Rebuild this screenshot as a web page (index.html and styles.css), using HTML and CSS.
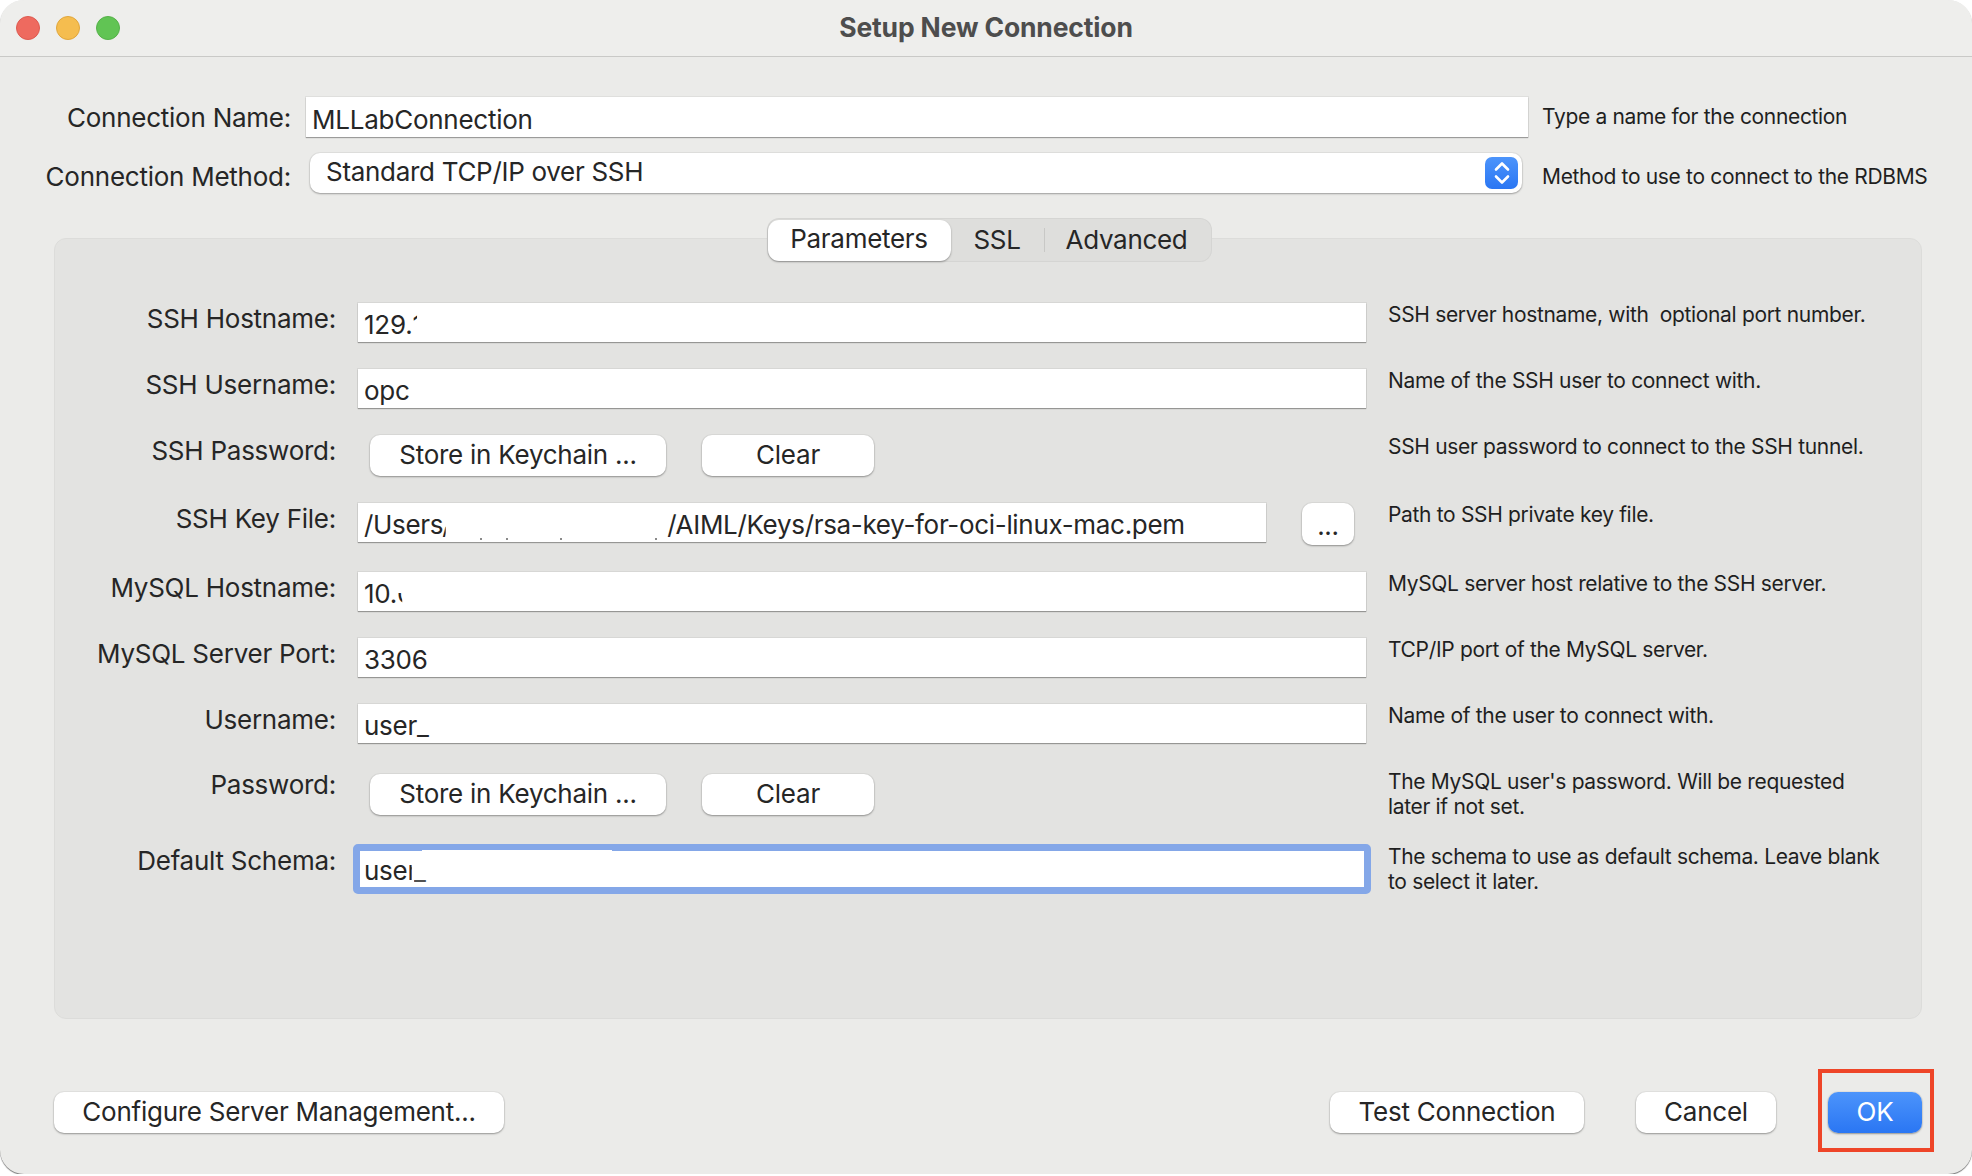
FILE: index.html
```html
<!DOCTYPE html>
<html lang="en">
<head>
    <meta charset="UTF-8">
    <meta name="viewport" content="width=device-width, initial-scale=1.0">
    <title>Setup New Connection</title>
    <link rel="stylesheet" href="styles.css">
</head>
<body>
    <div class="window">
        <header class="titlebar">
            <div class="lights">
                <span class="light red"></span>
                <span class="light yellow"></span>
                <span class="light green"></span>
            </div>
            <h1>Setup New Connection</h1>
        </header>

        <div class="content">
            <div class="top-form">
                <label class="top-label">Connection Name:</label>
                <div class="field top-field">MLLabConnection</div>
                <div class="top-hint">Type a name for the connection</div>

                <label class="top-label method-label">Connection Method:</label>
                <div class="select">
                    <span>Standard TCP/IP over SSH</span>
                    <span class="stepper">
                        <svg width="20" height="26" viewBox="0 0 20 26" fill="none" stroke="white" stroke-width="2.6" stroke-linecap="round" stroke-linejoin="round">
                            <path d="M4 9.5 L10 3.5 L16 9.5"/>
                            <path d="M4 16.5 L10 22.5 L16 16.5"/>
                        </svg>
                    </span>
                </div>
                <div class="top-hint method-hint">Method to use to connect to the RDBMS</div>
            </div>

            <section class="panel">
                <div class="tabs">
                    <span class="tab tab-active">Parameters</span>
                    <span class="tab tab-ssl">SSL</span>
                    <span class="tab-sep"></span>
                    <span class="tab tab-advanced">Advanced</span>
                </div>

                <div class="params">
                    <label>SSH Hostname:</label>
                    <div class="field">129.<span class="tick-one">1</span></div>
                    <div class="hint">SSH server hostname, with&nbsp; optional port number.</div>

                    <label>SSH Username:</label>
                    <div class="field">opc</div>
                    <div class="hint">Name of the SSH user to connect with.</div>

                    <label>SSH Password:</label>
                    <div class="buttons">
                        <button class="btn store">Store in Keychain ...</button>
                        <button class="btn clear">Clear</button>
                    </div>
                    <div class="hint">SSH user password to connect to the SSH tunnel.</div>

                    <label>SSH Key File:</label>
                    <div class="keyfile">
                        <div class="field key-input">/Users<span class="cut-slash">/</span><span class="path-gap"></span>/AIML/Keys/rsa-key-for-oci-linux-mac.pem</div>
                        <button class="btn browse">...</button>
                    </div>
                    <div class="hint">Path to SSH private key file.</div>

                    <label>MySQL Hostname:</label>
                    <div class="field">10.<span class="tick-zero">0</span></div>
                    <div class="hint">MySQL server host relative to the SSH server.</div>

                    <label>MySQL Server Port:</label>
                    <div class="field">3306</div>
                    <div class="hint">TCP/IP port of the MySQL server.</div>

                    <label>Username:</label>
                    <div class="field">user_</div>
                    <div class="hint">Name of the user to connect with.</div>

                    <label class="label-up">Password:</label>
                    <div class="buttons">
                        <button class="btn store">Store in Keychain ...</button>
                        <button class="btn clear">Clear</button>
                    </div>
                    <div class="hint hint-up">The MySQL user's password. Will be requested<br>later if not set.</div>

                    <label class="label-down">Default Schema:</label>
                    <div class="field focused">use<span class="cut-r">r</span><span class="cut-under">_</span><span class="ring-patch"></span></div>
                    <div class="hint hint-down">The schema to use as default schema. Leave blank<br>to select it later.</div>
                </div>
            </section>

            <footer class="footer">
                <button class="btn configure">Configure Server Management...</button>
                <div class="footer-right">
                    <button class="btn test">Test Connection</button>
                    <button class="btn cancel">Cancel</button>
                    <button class="btn ok">OK</button>
                </div>
            </footer>
        </div>

        <div class="highlight"></div>
    </div>
</body>
</html>
```

FILE: styles.css
```css
* {
    box-sizing: border-box;
}
body {
    margin: 0;
    background-color: white;
    font-family: Inter, "Noto Sans", sans-serif;
    color: #262626;
}
.window {
    position: relative;
    height: 1174px;
    background-color: #ebebe9;
    border-radius: 24px;
    box-shadow: 0 1px 1px rgba(0, 0, 0, 0.55);
    overflow: hidden;
}

/* title bar */
.titlebar {
    position: relative;
    height: 57px;
    padding-bottom: 2px;
    background-color: #eeeeec;
    border-bottom: 1px solid #c9c9c7;
    display: flex;
    align-items: center;
    justify-content: center;
}
.titlebar h1 {
    margin: 0;
    font-size: 26.5px;
    font-weight: 700;
    color: #4d4d4d;
    letter-spacing: -0.15px;
}
.lights {
    position: absolute;
    left: 16px;
    top: 16px;
    display: flex;
    gap: 16px;
}
.light {
    width: 24px;
    height: 24px;
    border-radius: 50%;
}
.red { background-color: #ee6a5f; border: 1px solid #dd5a50; }
.yellow { background-color: #f5bd4f; border: 1px solid #e0a63c; }
.green { background-color: #61c454; border: 1px solid #55b149; }

.content {
    padding: 40px 50px 0 54px;
}

/* top two rows */
.top-form {
    display: grid;
    grid-template-columns: 237px 1222px 1fr;
    grid-template-rows: 56px 45px;
    column-gap: 15px;
    margin-bottom: 40px;
}
.top-label, .params label {
    font-size: 26px;
    line-height: 30px;
    text-align: right;
    white-space: nowrap;
    letter-spacing: -0.25px;
}
.top-label {
    margin-top: 6px;
    margin-left: -30px;
}
.method-label {
    margin-top: 9px;
}
.top-hint, .hint {
    font-size: 21px;
    line-height: 25px;
    white-space: nowrap;
    color: #1f1f1f;
    letter-spacing: -0.33px;
}
.top-hint {
    margin-top: 7px;
    margin-left: -1px;
}
.method-hint {
    margin-top: 11px;
}

.field {
    position: relative;
    height: 39px;
    padding: 5px 6px 0;
    background-color: white;
    font-size: 26px;
    line-height: 34px;
    white-space: nowrap;
    letter-spacing: -0.25px;
    box-shadow: 0 1px 1px rgba(0, 0, 0, 0.3), 0 0 0 1px rgba(0, 0, 0, 0.05);
}
.top-field {
    height: 40px;
    padding-top: 6px;
}
.select {
    height: 40px;
    margin: 0 6px 0 4px;
    padding: 0 4px 0 16px;
    background-color: white;
    border-radius: 10px;
    box-shadow: 0 1px 2px rgba(0, 0, 0, 0.3), 0 0 0 1px rgba(0, 0, 0, 0.04);
    display: flex;
    align-items: center;
    justify-content: space-between;
    font-size: 26px;
    letter-spacing: -0.3px;
}
.select > span:first-child {
    margin-top: -4px;
}
.stepper {
    width: 33px;
    height: 32px;
    border-radius: 7px;
    background: linear-gradient(#4c94fb, #2a76f3);
    display: flex;
    align-items: center;
    justify-content: center;
}

/* tabbed panel */
.panel {
    width: 1868px;
    height: 781px;
    background-color: #e3e3e1;
    border: 1px solid #dcdcda;
    border-radius: 12px;
}
.tabs {
    width: 445px;
    height: 44px;
    margin: -21px auto 0;
    position: relative;
    left: 1px;
    display: flex;
    align-items: center;
    background-color: #dededc;
    border-radius: 12px;
    box-shadow: inset 0 0 0 1px rgba(0, 0, 0, 0.04);
    font-size: 26px;
    letter-spacing: -0.3px;
}
.tab {
    line-height: 38px;
    text-align: center;
}
.tab-active {
    width: 183px;
    margin-left: 1px;
    height: 41px;
    background-color: white;
    border-radius: 11px;
    box-shadow: 0 1px 2px rgba(0, 0, 0, 0.35);
}
.tab-ssl {
    width: 93px;
}
.tab-sep {
    width: 1px;
    height: 24px;
    background-color: #c8c8c6;
}
.tab-advanced {
    width: 164px;
}

.params {
    display: grid;
    grid-template-columns: 281px 1008px 1fr;
    grid-template-rows: 66px 66px 68px 69px 66px 66px 70px 70px auto;
    column-gap: 22px;
    margin-top: 41px;
}
.params label {
    margin-top: 1px;
}
.params .label-up {
    margin-top: -4px;
}
.params .label-down {
    margin-top: 2px;
}
.hint {
    margin-top: -1px;
}
.hint-up {
    margin-top: -5px;
}
.hint-down {
    margin-top: 0;
}
.field.focused {
    height: 50px;
    margin: 0 -5px 0 -5px;
    padding: 0 0 0 4px;
    border: 7px solid #84a7e8;
    border-radius: 5px;
    line-height: 40px;
    box-shadow: none;
}
.ring-patch {
    position: absolute;
    left: 62px;
    top: -1px;
    width: 190px;
    height: 2px;
    background-color: white;
}

/* characters partly painted over in the original */
.tick-one, .tick-zero, .cut-r, .cut-slash {
    display: inline-block;
}
.tick-one {
    clip-path: inset(0 55% 21px 0);
}
.tick-zero {
    clip-path: inset(16px 68% 6px 0);
}
.cut-r {
    clip-path: inset(0 55% 0 0);
    margin-right: -3px;
}
.cut-under {
    opacity: 0.8;
}
.cut-slash {
    clip-path: inset(55% 30% 0 0);
    margin-left: -1px;
    width: 5px;
}

.buttons {
    display: flex;
    gap: 36px;
    margin-left: 12px;
}
.btn {
    height: 41px;
    padding: 0 0 2px;
    border: none;
    border-radius: 10px;
    background-color: white;
    box-shadow: 0 1px 2px rgba(0, 0, 0, 0.35), 0 0 0 1px rgba(0, 0, 0, 0.03);
    font-family: Inter, "Noto Sans", sans-serif;
    font-size: 26px;
    color: #262626;
    letter-spacing: -0.25px;
}
.store {
    width: 296px;
}
.clear {
    width: 172px;
}
.keyfile {
    display: flex;
}
.key-input {
    width: 908px;
    overflow: hidden;
    letter-spacing: -0.32px;
}
.path-gap {
    display: inline-block;
    width: 220px;
    height: 24px;
    margin-bottom: -6px;
    background-image:
        linear-gradient(#8a8a8a, #8a8a8a), linear-gradient(#8a8a8a, #8a8a8a),
        linear-gradient(#8a8a8a, #8a8a8a), linear-gradient(#8a8a8a, #8a8a8a);
    background-size: 2px 2px;
    background-repeat: no-repeat;
    background-position: 33px 22px, 59px 22px, 113px 22px, 208px 22px;
}
.browse {
    width: 52px;
    margin-left: 36px;
    height: 42px;
    padding-top: 4px;
}

/* bottom buttons */
.footer {
    display: flex;
    justify-content: space-between;
    width: 1868px;
    margin-top: 73px;
}
.footer-right {
    display: flex;
}
.configure {
    width: 450px;
}
.test {
    width: 254px;
}
.cancel {
    width: 140px;
    margin-left: 52px;
}
.ok {
    width: 94px;
    margin-left: 52px;
    background: linear-gradient(#4c94fb, #2a76f3);
    color: white;
}

/* red annotation box round the OK button */
.highlight {
    position: absolute;
    left: 1818px;
    top: 1069px;
    width: 116px;
    height: 83px;
    border: 4px solid #ee4528;
}
```
